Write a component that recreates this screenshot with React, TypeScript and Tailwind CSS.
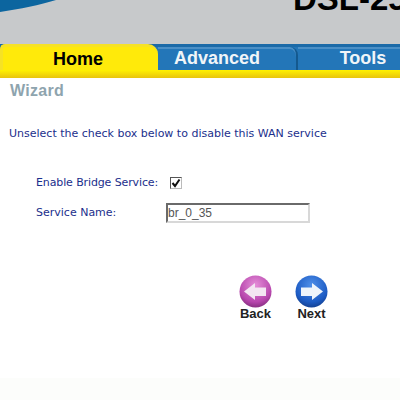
export default function App() {
  const sans = "font-['Liberation_Sans',Arial,sans-serif]";
  const body = "font-['DejaVu_Sans',Verdana,sans-serif]";
  return (
    <div className={`w-[400px] h-[400px] overflow-hidden flex flex-col bg-white ${sans}`}>
      <header className="relative h-[44px] shrink-0 overflow-hidden bg-[#c7c9cb]">
        <svg className="absolute left-0 top-0" width="70" height="14" viewBox="0 0 70 14">
          <path d="M0 12 C20 9 40 5 56 0 L0 0 Z" fill="#0c659f" />
        </svg>
        <div className="absolute left-[293px] top-[-17px] w-[107px] overflow-hidden whitespace-nowrap text-[33px] leading-[32px] font-bold text-black">DSL-25</div>
      </header>
      <nav className="h-[26px] shrink-0 flex bg-[#2376b8] text-[18px] leading-[26px] font-bold border-t-[3px] border-[#1b6aa8]">
        <div className="w-[158px] -mt-[3px] h-[26px] pt-[1px] pr-[5px] text-center rounded-tr-[10px] rounded-tl-[5px] bg-[#ffea0a] border-t-[3px] border-l-[3px] border-[#f6e225] text-black leading-[22px]">Home</div>
        <div className="w-[140px] pr-[20px] text-center text-[#f0f5f8] leading-[22px] border-r-[2px] border-[#14598f] rounded-tr-[8px] shadow-[inset_0_2px_0_#4b8fc6]">Advanced</div>
        <div className="flex-1 text-center text-[#f0f5f8] leading-[22px] pl-[28px] shadow-[inset_0_2px_0_#4b8fc6]">Tools</div>
      </nav>
      <div className="h-[8px] shrink-0 bg-gradient-to-b from-[#fff200] to-[#e8c40c]" />
      <main className={`flex-1 flex flex-col bg-white ${body} text-[#1b2f8c]`}>
        <h1 className={`${sans} pl-[10px] pt-[4px] text-[16px] leading-[18px] font-bold tracking-[0.3px] text-[#8ea4ae]`}>Wizard</h1>
        <p className="pl-[9px] mt-[27px] text-[11px] leading-[14px] whitespace-nowrap">Unselect the check box below to disable this WAN service</p>
        <div className="mt-[34px] pl-[36px] flex items-center h-[16px]">
          <span className="w-[134px] text-[11px] tracking-[-0.12px] leading-[14px] whitespace-nowrap">Enable Bridge Service:</span>
          <span className="w-[12px] h-[12px] border border-[#555] border-b-[#bbb] border-r-[#bbb] bg-white flex items-center justify-center">
            <svg width="10" height="10" viewBox="0 0 10 10"><path d="M1.5 5 L4 8 L8.5 1.5" fill="none" stroke="#111" strokeWidth="2" /></svg>
          </span>
        </div>
        <div className="mt-[11px] pl-[36px] flex items-center h-[21px]">
          <span className="w-[130px] text-[11px] leading-[14px]">Service Name:</span>
          <span className={`${sans} w-[144px] h-[20px] border-2 border-[#6a6a6a] border-r-[#d8d8d8] border-b-[#d8d8d8] text-[12px] leading-[16px] text-[#555]`}>br_0_35</span>
        </div>
        <div className={`${sans} mt-[52px] ml-[239px] flex gap-[23px] text-[13px] leading-[14px] font-bold text-[#222]`}>
          <div className="w-[33px] flex flex-col items-center">
            <svg width="33" height="33" viewBox="0 0 33 33">
              <defs>
                <radialGradient id="p" cx="0.5" cy="0.3" r="0.75"><stop offset="0" stopColor="#e58fd8" /><stop offset="0.7" stopColor="#b746ad" /><stop offset="1" stopColor="#7c2a76" /></radialGradient>
              </defs>
              <circle cx="16.5" cy="16.5" r="16" fill="url(#p)" />
              <path d="M5 16.5 L16 8 V12.5 H27 V21 H16 V25 Z" fill="#f3e6f2" />
            </svg>
            <span className="-mt-[1px]">Back</span>
          </div>
          <div className="w-[33px] flex flex-col items-center">
            <svg width="33" height="33" viewBox="0 0 33 33">
              <defs>
                <radialGradient id="b" cx="0.5" cy="0.3" r="0.75"><stop offset="0" stopColor="#4f8fe8" /><stop offset="0.7" stopColor="#1c5bc4" /><stop offset="1" stopColor="#123b86" /></radialGradient>
              </defs>
              <circle cx="16.5" cy="16.5" r="16" fill="url(#b)" />
              <path d="M28 16.5 L17 8 V12.5 H6 V21 H17 V25 Z" fill="#eef4fb" />
            </svg>
            <span className="-mt-[1px]">Next</span>
          </div>
        </div>
        <div className="flex-1" />
        <div className="h-[22px] shrink-0 bg-[#fcfdfb]" />
      </main>
    </div>
  );
}
